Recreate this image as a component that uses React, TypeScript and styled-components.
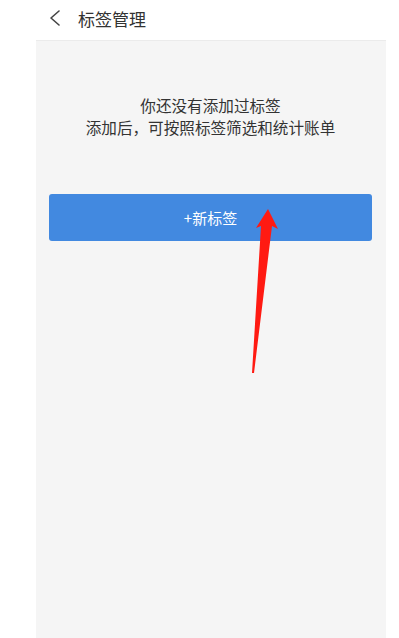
import styled, { createGlobalStyle } from "styled-components";

const GlobalStyle = createGlobalStyle`
  html, body {
    margin: 0;
    padding: 0;
    background: #ffffff;
    font-family: "Noto Sans CJK SC", "Noto Sans", sans-serif;
  }
`;

const App = () => {
  return (
    <Page>
      <GlobalStyle />
      <Header>
        <BackIcon viewBox="0 0 12 16">
          <path d="M10 1 L2 8 L10 15" />
        </BackIcon>
        <Title>标签管理</Title>
      </Header>
      <Panel>
        <Empty>
          <EmptyLine>你还没有添加过标签</EmptyLine>
          <EmptyLine>添加后，可按照标签筛选和统计账单</EmptyLine>
        </Empty>
        <AddButton>+新标签</AddButton>
      </Panel>
      <Arrow viewBox="0 0 399 638">
        <polygon points="268,209 278,229 272,226 254,373 252,373 261,226 256,228" />
      </Arrow>
    </Page>
  );
};

export default App;

const Page = styled.div`
  position: relative;
  width: 399px;
  height: 638px;
  overflow: hidden;
`;

const Header = styled.div`
  display: flex;
  align-items: center;
  height: 40px;
  padding-left: 49px;
  box-sizing: border-box;
`;

const BackIcon = styled.svg`
  width: 12px;
  height: 16px;
  margin-top: -4px;
  fill: none;
  stroke: #444;
  stroke-width: 1.6;
  stroke-linecap: round;
  stroke-linejoin: round;
`;

const Title = styled.div`
  margin-left: 17px;
  margin-top: -4px;
  font-size: 17px;
  color: #333;
`;

const Panel = styled.div`
  display: flex;
  flex-direction: column;
  margin-left: 36px;
  width: 350px;
  height: 598px;
  background: #f5f5f5;
  border-top: 1px solid #ebebeb;
  box-sizing: border-box;
  padding: 53px 14px 0 13px;
`;

const Empty = styled.div`
  display: flex;
  flex-direction: column;
  align-items: center;
`;

const EmptyLine = styled.div`
  font-size: 15.6px;
  line-height: 22px;
  color: #333;
`;

const AddButton = styled.div`
  display: flex;
  align-items: center;
  justify-content: center;
  margin-top: 56px;
  height: 47px;
  border-radius: 3px;
  background: #4289e0;
  color: #fff;
  font-size: 15px;
`;

const Arrow = styled.svg`
  position: absolute;
  left: 0;
  top: 0;
  width: 399px;
  height: 638px;
  pointer-events: none;
  fill: #ff1a12;
`;
